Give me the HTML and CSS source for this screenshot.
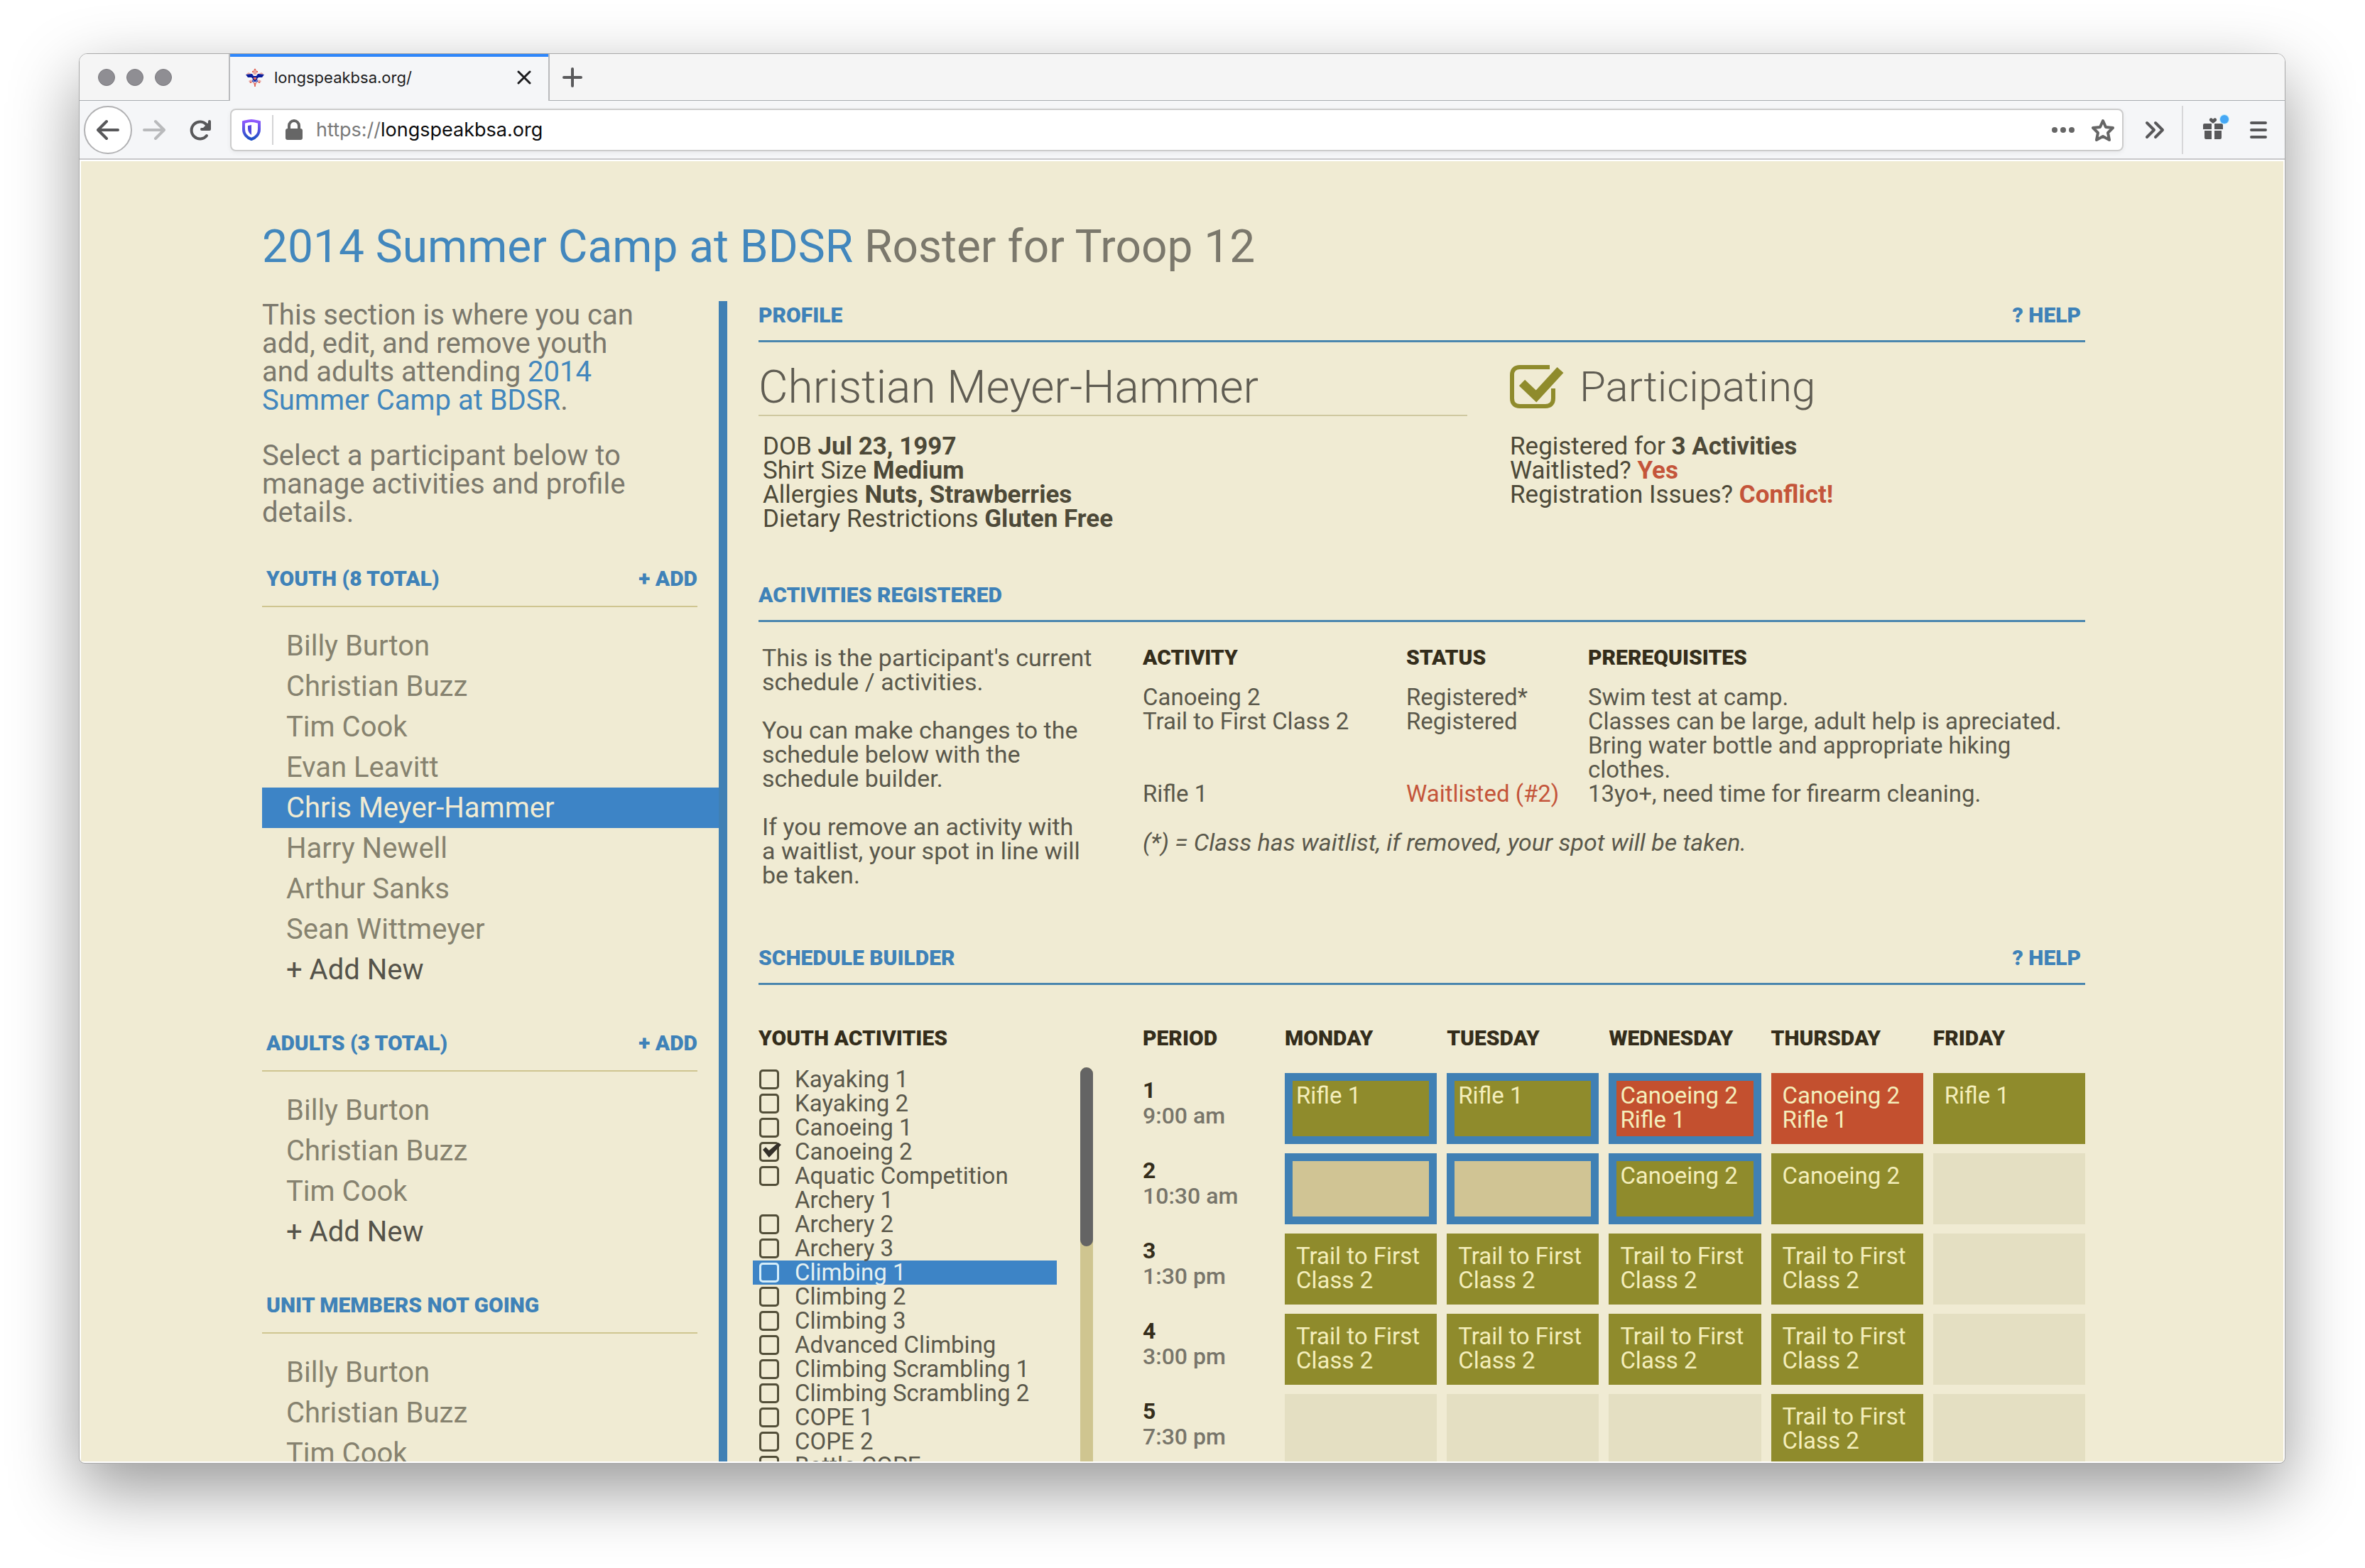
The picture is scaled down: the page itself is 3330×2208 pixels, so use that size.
FILE: index.html
```
<!DOCTYPE html>
<html lang="en">
<head>
    <meta charset="UTF-8">
    <meta name="viewport" content="width=device-width, initial-scale=1.0">
    <title>2014 Summer Camp at BDSR Roster</title>
    <link rel="stylesheet" href="styles.css">
</head>
<body>
    <div class="window">
        <div class="tab-bar">
            <div class="lights"><span></span><span></span><span></span></div>
            <div class="tab">
                <svg class="favicon" viewBox="0 0 26 26" width="26" height="26" aria-hidden="true">
                    <path fill="#e8a9a4" d="M13 0l3 4-1 5h-4l-1-5zM1 8l3-2 4 2-3 3zM25 8l-3-2-4 2 3 3zM4 18l4-2 2 4-4 1zM22 18l-4-2-2 4 4 1zM10 20h6l-3 6z"/>
                    <path fill="#0a1c9c" d="M0 9l9-1 2 3h4l2-3 9 1-3 4h-5l-2 2 1 4h-8l1-4-2-2H3z"/>
                    <path fill="#e26a5c" d="M11 13h4v3h-4zM12 21h2v5h-2zM6 19h2v2H6zM18 19h2v2h-2zM12 1h2v2h-2zM9 4h2v2H9zM15 4h2v2h-2z"/>
                    <path fill="#6d80d0" d="M10 17h2v3h-2zM14 17h2v3h-2z"/>
                </svg>
                <span class="tab-title">longspeakbsa.org/</span>
                <button class="icon-button" aria-label="Close tab">
                    <svg viewBox="0 0 20 20" width="20" height="20"><path d="M2 2l16 16M18 2L2 18" stroke="#1c1c1e" stroke-width="3" stroke-linecap="round"/></svg>
                </button>
            </div>
            <button class="icon-button new-tab" aria-label="New tab">
                <svg viewBox="0 0 28 28" width="28" height="28"><path d="M14 2v24M2 14h24" stroke="#5a5a5c" stroke-width="4" stroke-linecap="round"/></svg>
            </button>
        </div>

        <div class="toolbar">
            <button class="icon-button back" aria-label="Back">
                <svg viewBox="0 0 32 32" width="32" height="32"><path d="M30 16H2M14 4L2 16l12 12" fill="none" stroke="#58585a" stroke-width="4" stroke-linecap="round" stroke-linejoin="round"/></svg>
            </button>
            <button class="icon-button forward" aria-label="Forward">
                <svg viewBox="0 0 32 32" width="32" height="32"><path d="M2 16h28M18 4l12 12-12 12" fill="none" stroke="#b9babc" stroke-width="4" stroke-linecap="round" stroke-linejoin="round"/></svg>
            </button>
            <button class="icon-button reload" aria-label="Reload">
                <svg viewBox="0 0 32 32" width="32" height="32"><path d="M25 24a12 12 0 1 1 0-15" fill="none" stroke="#58585a" stroke-width="4" stroke-linecap="round"/><path d="M29 4v11H18" fill="none" stroke="#58585a" stroke-width="4" stroke-linecap="round" stroke-linejoin="round"/><path d="M20 13l9-9v10z" fill="#58585a"/></svg>
            </button>
            <div class="url-bar">
                <svg viewBox="0 0 26 30" width="26" height="30" aria-hidden="true">
                    <defs>
                        <linearGradient id="shield" x1="0" y1="0" x2="0" y2="1"><stop offset="0" stop-color="#9059ff"/><stop offset="1" stop-color="#1d4fc4"/></linearGradient>
                    </defs>
                    <path d="M13 2c4 0 7 1 11 2v10c0 7-5 12-11 14C7 26 2 21 2 14V4c4-1 7-2 11-2z" fill="#fff" stroke="url(#shield)" stroke-width="4"/>
                    <path d="M13 8v14c-3-2-5-5-5-9V9z" fill="#5348dd"/>
                </svg>
                <span class="url-divider"></span>
                <svg viewBox="0 0 26 30" width="26" height="30" aria-hidden="true">
                    <path d="M6 14V9a7 7 0 0 1 14 0v5" fill="none" stroke="#666" stroke-width="4"/>
                    <rect x="1" y="13" width="24" height="16" rx="3" fill="#666"/>
                </svg>
                <label class="url"><span class="url-scheme">https://</span><input type="text" value="longspeakbsa.org" aria-label="Address"></label>
                <button class="icon-button dots" aria-label="Page actions">
                    <svg viewBox="0 0 32 8" width="32" height="8" fill="#666"><circle cx="4" cy="4" r="4"/><circle cx="16" cy="4" r="4"/><circle cx="28" cy="4" r="4"/></svg>
                </button>
                <button class="icon-button" aria-label="Bookmark">
                    <svg viewBox="0 0 32 32" width="32" height="32"><path d="M16 3l4 9 10 1-7 7 2 10-9-5-9 5 2-10-7-7 10-1z" fill="none" stroke="#666" stroke-width="4" stroke-linejoin="round"/></svg>
                </button>
            </div>
            <button class="icon-button more" aria-label="More tools">
                <svg viewBox="0 0 28 26" width="28" height="26"><path d="M3 3l10 10L3 23M15 3l10 10-10 10" fill="none" stroke="#58585a" stroke-width="4" stroke-linecap="round" stroke-linejoin="round"/></svg>
            </button>
            <span class="toolbar-divider"></span>
            <button class="icon-button gift" aria-label="What's new">
                <svg viewBox="0 0 38 38" width="38" height="38"><path d="M0 16a2 2 0 0 1 2-2h10v8H0zM16 14h10a2 2 0 0 1 2 2v6H16zM2 24h10v12H4a2 2 0 0 1-2-2zM16 24h10v10a2 2 0 0 1-2 2h-8z" fill="#58585a"/><path d="M14 14l-5-4c-1-4 3-5 5-2 2-3 6-2 5 2z" fill="#58585a"/><circle cx="30" cy="8" r="7" fill="#b9e9fb"/><circle cx="30" cy="8" r="6" fill="#45a7f5"/></svg>
            </button>
            <button class="icon-button" aria-label="Menu">
                <svg viewBox="0 0 24 24" width="24" height="24"><path d="M2 2h20M2 12h20M2 22h20" stroke="#58585a" stroke-width="4" stroke-linecap="round"/></svg>
            </button>
        </div>

        <div class="page">
            <h1><a href="#">2014 Summer Camp at BDSR</a> Roster for Troop 12</h1>

            <div class="columns">
                <aside class="sidebar">
                    <p class="intro">This section is where you can<br>add, edit, and remove youth<br>and adults attending <a href="#">2014<br>Summer Camp at BDSR</a>.</p>
                    <p class="intro">Select a participant below to<br>manage activities and profile<br>details.</p>

                    <div class="list-heading">
                        <h2>YOUTH (8 TOTAL)</h2>
                        <button class="action">+ ADD</button>
                    </div>
                    <ul class="people">
                        <li><a href="#">Billy Burton</a></li>
                        <li><a href="#">Christian Buzz</a></li>
                        <li><a href="#">Tim Cook</a></li>
                        <li><a href="#">Evan Leavitt</a></li>
                        <li><a href="#" class="selected">Chris Meyer-Hammer</a></li>
                        <li><a href="#">Harry Newell</a></li>
                        <li><a href="#">Arthur Sanks</a></li>
                        <li><a href="#">Sean Wittmeyer</a></li>
                        <li><a href="#" class="add-new">+ Add New</a></li>
                    </ul>

                    <div class="list-heading">
                        <h2>ADULTS (3 TOTAL)</h2>
                        <button class="action">+ ADD</button>
                    </div>
                    <ul class="people">
                        <li><a href="#">Billy Burton</a></li>
                        <li><a href="#">Christian Buzz</a></li>
                        <li><a href="#">Tim Cook</a></li>
                        <li><a href="#" class="add-new">+ Add New</a></li>
                    </ul>

                    <div class="list-heading">
                        <h2>UNIT MEMBERS NOT GOING</h2>
                    </div>
                    <ul class="people">
                        <li><a href="#">Billy Burton</a></li>
                        <li><a href="#">Christian Buzz</a></li>
                        <li><a href="#">Tim Cook</a></li>
                    </ul>
                </aside>

                <main class="main">
                    <section>
                        <div class="section-heading">
                            <h2>PROFILE</h2>
                            <button class="action">? HELP</button>
                        </div>
                        <div class="profile">
                            <div class="profile-left">
                                <h3 class="name">Christian Meyer-Hammer</h3>
                                <p class="details">
                                    DOB <b>Jul 23, 1997</b><br>
                                    Shirt Size <b>Medium</b><br>
                                    Allergies <b>Nuts, Strawberries</b><br>
                                    Dietary Restrictions <b>Gluten Free</b>
                                </p>
                            </div>
                            <div class="profile-right">
                                <h3 class="status">
                                    <svg viewBox="0 0 78 64" width="78" height="64" aria-hidden="true">
                                        <path d="M56 4H14C7 4 3 8 3 15v33c0 7 4 11 11 11h36c7 0 11-4 11-11V34" fill="none" stroke="#8f8b2c" stroke-width="6"/>
                                        <path d="M17 26l20 19L71 8" fill="none" stroke="#8f8b2c" stroke-width="12"/>
                                    </svg>
                                    Participating
                                </h3>
                                <p class="details">
                                    Registered for <b>3 Activities</b><br>
                                    Waitlisted? <b class="alert">Yes</b><br>
                                    Registration Issues? <b class="alert">Conflict!</b>
                                </p>
                            </div>
                        </div>
                    </section>

                    <section>
                        <div class="section-heading">
                            <h2>ACTIVITIES REGISTERED</h2>
                        </div>
                        <div class="registered">
                            <div class="note">
                                <p>This is the participant's current<br>schedule / activities.</p>
                                <p>You can make changes to the<br>schedule below with the<br>schedule builder.</p>
                                <p>If you remove an activity with<br>a waitlist, your spot in line will<br>be taken.</p>
                            </div>
                            <div>
                                <table class="activity-table">
                                    <thead>
                                        <tr><th class="col-activity">ACTIVITY</th><th class="col-status">STATUS</th><th>PREREQUISITES</th></tr>
                                    </thead>
                                    <tbody>
                                        <tr><td>Canoeing 2</td><td>Registered*</td><td>Swim test at camp.</td></tr>
                                        <tr><td>Trail to First Class 2</td><td>Registered</td><td>Classes can be large, adult help is apreciated.<br>Bring water bottle and appropriate hiking<br>clothes.</td></tr>
                                        <tr><td>Rifle 1</td><td class="alert">Waitlisted (#2)</td><td>13yo+, need time for firearm cleaning.</td></tr>
                                    </tbody>
                                </table>
                                <p class="footnote">(*) = Class has waitlist, if removed, your spot will be taken.</p>
                            </div>
                        </div>
                    </section>

                    <section>
                        <div class="section-heading">
                            <h2>SCHEDULE BUILDER</h2>
                            <button class="action">? HELP</button>
                        </div>
                        <div class="builder">
                            <div class="picker">
                                <h3 class="dark-heading">YOUTH ACTIVITIES</h3>
                                <div class="picker-body">
                                    <div class="options">
                                        <label><input type="checkbox">Kayaking 1</label>
                                        <label><input type="checkbox">Kayaking 2</label>
                                        <label><input type="checkbox">Canoeing 1</label>
                                        <label><input type="checkbox" checked>Canoeing 2</label>
                                        <label><input type="checkbox">Aquatic Competition</label>
                                        <span class="no-box">Archery 1</span>
                                        <label><input type="checkbox">Archery 2</label>
                                        <label><input type="checkbox">Archery 3</label>
                                        <label class="highlight"><input type="checkbox">Climbing 1</label>
                                        <label><input type="checkbox">Climbing 2</label>
                                        <label><input type="checkbox">Climbing 3</label>
                                        <label><input type="checkbox">Advanced Climbing</label>
                                        <label><input type="checkbox">Climbing Scrambling 1</label>
                                        <label><input type="checkbox">Climbing Scrambling 2</label>
                                        <label><input type="checkbox">COPE 1</label>
                                        <label><input type="checkbox">COPE 2</label>
                                        <label><input type="checkbox">Battle COPE</label>
                                    </div>
                                    <div class="scrollbar"><div class="thumb"></div></div>
                                </div>
                            </div>
                            <table class="schedule">
                                <thead>
                                    <tr><th class="col-period">PERIOD</th><th>MONDAY</th><th>TUESDAY</th><th>WEDNESDAY</th><th>THURSDAY</th><th>FRIDAY</th></tr>
                                </thead>
                                <tbody>
                                    <tr>
                                        <th><span>1</span>9:00 am</th>
                                        <td><div class="slot booked outlined">Rifle 1</div></td>
                                        <td><div class="slot booked outlined">Rifle 1</div></td>
                                        <td><div class="slot conflict outlined">Canoeing 2<br>Rifle 1</div></td>
                                        <td><div class="slot conflict">Canoeing 2<br>Rifle 1</div></td>
                                        <td><div class="slot booked">Rifle 1</div></td>
                                    </tr>
                                    <tr>
                                        <th><span>2</span>10:30 am</th>
                                        <td><div class="slot open outlined"></div></td>
                                        <td><div class="slot open outlined"></div></td>
                                        <td><div class="slot booked outlined">Canoeing 2</div></td>
                                        <td><div class="slot booked">Canoeing 2</div></td>
                                        <td><div class="slot"></div></td>
                                    </tr>
                                    <tr>
                                        <th><span>3</span>1:30 pm</th>
                                        <td><div class="slot booked">Trail to First<br>Class 2</div></td>
                                        <td><div class="slot booked">Trail to First<br>Class 2</div></td>
                                        <td><div class="slot booked">Trail to First<br>Class 2</div></td>
                                        <td><div class="slot booked">Trail to First<br>Class 2</div></td>
                                        <td><div class="slot"></div></td>
                                    </tr>
                                    <tr>
                                        <th><span>4</span>3:00 pm</th>
                                        <td><div class="slot booked">Trail to First<br>Class 2</div></td>
                                        <td><div class="slot booked">Trail to First<br>Class 2</div></td>
                                        <td><div class="slot booked">Trail to First<br>Class 2</div></td>
                                        <td><div class="slot booked">Trail to First<br>Class 2</div></td>
                                        <td><div class="slot"></div></td>
                                    </tr>
                                    <tr>
                                        <th><span>5</span>7:30 pm</th>
                                        <td><div class="slot"></div></td>
                                        <td><div class="slot"></div></td>
                                        <td><div class="slot"></div></td>
                                        <td><div class="slot booked">Trail to First<br>Class 2</div></td>
                                        <td><div class="slot"></div></td>
                                    </tr>
                                </tbody>
                            </table>
                        </div>
                    </section>
                </main>
            </div>
        </div>
    </div>
</body>
</html>
```
FILE: styles.css
```
* {
    box-sizing: border-box;
}
body {
    margin: 0;
    height: 100vh;
    padding: 75px 112px 147px 111px;
    display: flex;
    background: #fff;
    font-family: Roboto, "Liberation Sans", sans-serif;
    font-size: 33px;
    line-height: 34px;
    color: #5a584b;
}
h1, h2, h3, p, ul {
    margin: 0;
    padding: 0;
}
a {
    color: inherit;
    text-decoration: none;
}
button {
    padding: 0;
    border: none;
    background: none;
    font: inherit;
    cursor: pointer;
}
svg {
    display: block;
}

/* browser window */
.window {
    flex: 1;
    display: flex;
    flex-direction: column;
    overflow: hidden;
    border: 1px solid #a9a9a9;
    border-radius: 12px 12px 8px 8px;
    background: #fff;
    box-shadow: 0 36px 96px rgba(0, 0, 0, 0.41);
}
.icon-button {
    display: flex;
    align-items: center;
    justify-content: center;
    flex: none;
}
.tab-bar {
    flex: none;
    height: 66px;
    display: flex;
    align-items: stretch;
    background: linear-gradient(#a9adb2, #a9adb2) bottom / 100% 1px no-repeat #f5f5f5;
}
.lights {
    width: 210px;
    padding-left: 26px;
    display: flex;
    align-items: center;
    gap: 16px;
}
.lights span {
    width: 24px;
    height: 24px;
    border: 1px solid #7b7a7f;
    border-radius: 50%;
    background: #8f8e93;
}
.tab {
    width: 452px;
    padding: 0 24px 0 22px;
    display: flex;
    align-items: center;
    gap: 14px;
    border: solid #b9babc;
    border-width: 0 2px;
    background: linear-gradient(#2e86fb, #2e86fb) top / 100% 4px no-repeat #f5f6f8;
    font-family: Inter, sans-serif;
    font-size: 22px;
    color: #1c1c1e;
}
.tab-title {
    flex: 1;
}
.new-tab {
    margin-left: 18px;
}
.toolbar {
    flex: none;
    height: 83px;
    padding: 0 25px 0 6px;
    display: flex;
    align-items: center;
    border-bottom: 2px solid #c8c8ca;
    background: #f5f6f8;
}
.back {
    width: 68px;
    height: 68px;
    border: 2px solid #b1b1b3;
    border-radius: 50%;
    background: #fff;
}
.forward {
    margin-left: 15px;
}
.reload {
    margin: 0 26px 0 33px;
}
.url-bar {
    flex: 1;
    height: 60px;
    padding: 0 11px 0 15px;
    display: flex;
    align-items: center;
    border: 2px solid #ccc;
    border-radius: 8px;
    background: #fff;
    box-shadow: 0 2px 6px rgba(0, 0, 0, 0.06);
}
.url-divider {
    width: 2px;
    height: 42px;
    margin: 0 16px;
    background: #d4d4d6;
}
.url {
    flex: 1;
    margin-left: 18px;
    display: flex;
    align-items: center;
    font-family: Inter, sans-serif;
    font-size: 27px;
}
.url-scheme {
    color: #7a7a7a;
}
.url input {
    flex: 1;
    padding: 0;
    border: none;
    outline: none;
    background: none;
    font: inherit;
    color: #0c0c0d;
}
.dots {
    margin-right: 24px;
}
.more {
    margin: 0 24px 0 30px;
}
.toolbar-divider {
    width: 2px;
    height: 68px;
    background: #d7d7d9;
}
.gift {
    margin: 0 28px 8px;
}

/* page */
.page {
    flex: 1;
    min-height: 0;
    overflow: hidden;
    margin: 2px 2px 2px 2px;
    padding: 81px 279px 0 255px;
    background: #f0ebd3;
}
h1 {
    font-size: 64px;
    font-weight: 400;
    line-height: 80px;
    color: #7b786c;
}
h1 a, .intro a {
    color: #4287bd;
}
.columns {
    margin-top: 36px;
    display: flex;
    align-items: flex-start;
}
.sidebar {
    width: 655px;
    flex: none;
    border-right: 12px solid #4080b4;
}
.intro {
    font-size: 40px;
    font-weight: 400;
    line-height: 40px;
    margin-bottom: 38px;
    color: #7b786c;
}
.list-heading {
    margin: 55px 30px 0 0;
    padding: 0 0 18px 6px;
    display: flex;
    justify-content: space-between;
    border-bottom: 2px solid #cfc590;
}
.intro + .list-heading {
    margin-top: 53px;
}
h2, .action, .dark-heading, thead th {
    font-size: 30px;
    font-weight: 900;
    line-height: 40px;
    color: #3f82b8;
}
.people {
    list-style: none;
    padding-top: 26px;
}
.people a {
    display: block;
    padding-left: 34px;
    font-size: 40px;
    line-height: 57px;
    color: #86826f;
}
.people .selected {
    background: #3d84c6;
    color: #f0ebd3;
}
.people .add-new {
    color: #55534a;
}

.main {
    flex: 1;
    min-width: 0;
    padding-left: 44px;
}
.section-heading {
    padding: 0 6px 15px 0;
    display: flex;
    justify-content: space-between;
    border-bottom: 3px solid #4a86ae;
}
.profile {
    padding: 22px 0 70px;
    display: flex;
    gap: 60px;
}
.profile-left {
    flex: 0 0 998px;
}
.name, .status {
    height: 82px;
    font-size: 64px;
    font-weight: 300;
    line-height: 84px;
    color: #5f5c52;
}
.name {
    border-bottom: 2px solid #cfc8a0;
}
.status {
    display: flex;
    align-items: center;
    gap: 20px;
    font-size: 60px;
}
.details {
    margin-top: 26px;
    font-size: 35px;
    font-weight: 400;
    color: #4d4938;
}
.profile-left .details {
    padding-left: 6px;
    min-height: 136px;
}
.details b {
    font-weight: 700;
}
.details .alert, .alert {
    color: #c4553a;
}

.registered {
    padding: 33px 0 80px;
    display: flex;
}
.note {
    flex: 0 0 541px;
    padding-left: 5px;
}
.note, .footnote {
    font-size: 34px;
}
.note p + p, .footnote {
    margin-top: 34px;
}
.footnote {
    font-style: italic;
}
table {
    border-collapse: collapse;
    table-layout: fixed;
    width: 100%;
}
th, td {
    padding: 0;
    text-align: left;
    vertical-align: top;
}
.dark-heading, thead th {
    line-height: 34px;
    color: #342d1b;
}
.activity-table {
    width: 1327px;
}
.activity-table th {
    padding-bottom: 22px;
}
.col-activity {
    width: 371px;
}
.col-status {
    width: 256px;
}

.builder {
    padding-top: 58px;
    display: flex;
    align-items: flex-start;
}
.picker {
    flex: 0 0 541px;
    padding-right: 70px;
}
.picker-body {
    margin: 24px 0 0 -8px;
    display: flex;
    justify-content: space-between;
}
.options {
    width: 428px;
}
.options label, .no-box {
    display: flex;
    align-items: center;
    gap: 22px;
    padding-left: 9px;
}
.options .no-box {
    padding-left: 59px;
}
.options .highlight {
    background: #3d84c6;
    color: #e4f0f0;
}
.options input {
    appearance: none;
    position: relative;
    width: 28px;
    height: 28px;
    margin: 0;
    border: 3px solid #524e38;
    border-radius: 5px;
}
.options .highlight input {
    border-color: #d5eefa;
}
.options input:checked::after {
    content: "";
    position: absolute;
    left: 2px;
    top: -2px;
    width: 26px;
    height: 22px;
    background: #35312a;
    clip-path: polygon(0 45%, 16% 28%, 34% 50%, 84% 0, 100% 14%, 34% 96%);
}
.scrollbar {
    width: 18px;
    background: #cfc590;
    border-radius: 9px;
}
.thumb {
    height: 252px;
    border-radius: 9px;
    background: #646464;
}
.schedule {
    flex: 1;
}
.schedule thead th {
    padding-bottom: 32px;
}
.schedule .col-period {
    width: 186px;
}
.schedule thead th + th {
    padding-left: 14px;
}
.schedule td {
    padding: 0 0 13px 14px;
}
.schedule tbody th {
    padding-top: 6px;
    font-size: 32px;
    font-weight: 500;
    line-height: 37px;
    color: #78756a;
}
.schedule tbody th span {
    display: block;
    font-weight: 700;
    line-height: 36px;
    color: #342d1b;
}
.slot {
    height: 100px;
    padding: 15px 16px;
    background: #e4dfc2;
    color: #f4eebb;
    white-space: nowrap;
}
.booked {
    background: #8f8b2c;
}
.conflict {
    background: #c3502f;
}
.open {
    background: #d0c494;
}
.outlined {
    padding: 4px 5px;
    border: 11px solid #4080b4;
}
```
